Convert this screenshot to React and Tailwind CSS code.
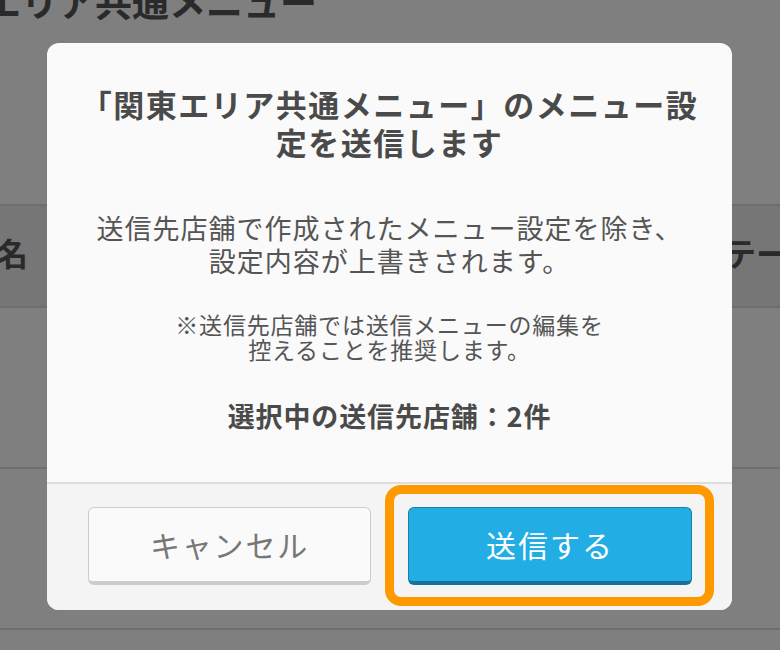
export default function App() {
  return (
    <div
      className="relative w-[780px] h-[650px] overflow-hidden bg-white text-[#555]"
      style={{ fontFamily: '"Noto Sans CJK JP", "Noto Sans", sans-serif' }}
    >
      {/* page underneath */}
      <div className="-ml-[16px] -mt-[22px] h-[226px] text-[37px] font-bold leading-[46px] whitespace-nowrap">
        エリア共通メニュー
      </div>
      <div className="border-t-2 border-[#dcdcdc]">
        <div className="flex h-[100px] items-center justify-between bg-[#ececec] pb-[8px] text-[32px] font-bold whitespace-nowrap">
          <span className="-ml-[4px]">名</span>
          <span className="-mr-[72px]">ステータス</span>
        </div>
        <div className="h-[161px] border-t-2 border-[#dcdcdc]" />
        <div className="h-[161px] border-t-2 border-[#dcdcdc]" />
        <div className="h-[161px] border-t-2 border-[#dcdcdc]" />
      </div>

      {/* overlay + dialog */}
      <div className="absolute inset-0 flex justify-center bg-black/50 pt-[43px]">
        <div className="ml-[-1px] flex h-[567px] w-[685px] flex-col overflow-hidden rounded-[12px] bg-[#fafafa]">
          <div className="flex flex-1 flex-col items-center pt-[42px] text-center">
            <h2 className="whitespace-nowrap text-[31px] font-bold leading-[38px] tracking-[1.5px] text-[#4a4a4a]">
              「関東エリア共通メニュー」のメニュー設
              <br />
              定を送信します
            </h2>
            <p className="mt-[50px] whitespace-nowrap text-[27px] leading-[33px] tracking-[1px] text-[#555]">
              送信先店舗で作成されたメニュー設定を除き、
              <br />
              設定内容が上書きされます。
            </p>
            <p className="mt-[35px] whitespace-nowrap text-[23px] leading-[25px] tracking-[0.8px] text-[#555]">
              ※送信先店舗では送信メニューの編集を
              <br />
              控えることを推奨します。
            </p>
            <p className="mt-[37px] whitespace-nowrap text-[27px] font-bold leading-[34px] tracking-[0.9px] text-[#4a4a4a]">
              選択中の送信先店舗：2件
            </p>
          </div>
          <div className="flex h-[128px] items-start gap-[37px] border-t-2 border-[#dedede] bg-[#f4f4f4] pl-[41px] pr-[40px] pt-[23px]">
            <button className="h-[78px] w-[283px] rounded-[6px] border border-b-4 border-[#cccccc] bg-[#fafafa] text-[30px] tracking-[1.8px] text-[#777]">
              キャンセル
            </button>
            <div className="relative">
              <button className="block h-[78px] w-[284px] rounded-[6px] border border-b-4 border-[#1b7fac] border-b-[#17719a] bg-[#22aee4] text-[30px] tracking-[2px] text-white">
                送信する
              </button>
              <div className="pointer-events-none absolute -left-[23px] -top-[22px] -right-[22px] -bottom-[21px] rounded-[16px] border-[9px] border-[#ff9900]" />
            </div>
          </div>
        </div>
      </div>
    </div>
  );
}
